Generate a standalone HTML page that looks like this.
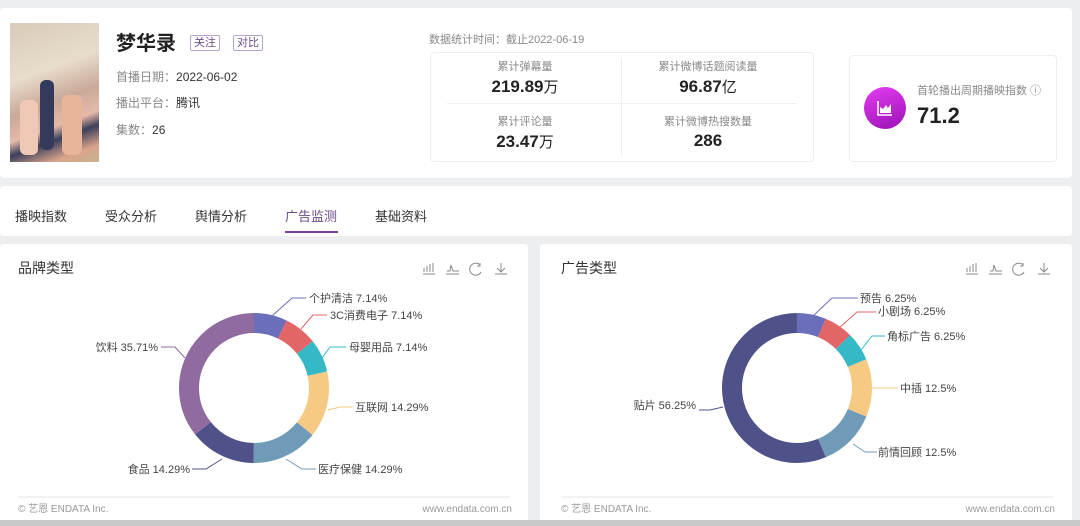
<!DOCTYPE html><html><head><meta charset="utf-8"><style>
*{margin:0;padding:0;box-sizing:border-box}
body{width:1080px;height:526px;background:#eceeef;font-family:"Liberation Sans","Noto Sans CJK SC",sans-serif;position:relative;overflow:hidden;color:#333}
.a{position:absolute;white-space:nowrap}
.card{position:absolute;background:#fff;border-radius:4px}
.g{color:#888}
.tag{position:absolute;border:1px solid #b9a3cc;color:#6b4c8a;font-size:11px;height:16px;line-height:14px;padding:0 3px;border-radius:2px}
.lab{font-size:11px;color:#888;text-align:center;position:absolute}
.val{font-size:17px;font-weight:bold;color:#222;text-align:center;position:absolute}
.val span{font-weight:normal;font-size:15px}
.tab{position:absolute;top:206px;font-size:13px;color:#333}
.ft{font-size:10px;color:#999}
</style></head><body>
<div class="card" style="left:0;top:8px;width:1072px;height:170px"></div>
<div class="a" style="left:10px;top:23px;width:89px;height:139px;background:linear-gradient(160deg,#d8cbb8 0%,#e8dccb 35%,#c9a99a 55%,#e6b9a8 70%,#3b3f5a 78%,#d9a48c 90%,#c7b28f 100%)"></div>
<div class="a" style="left:40px;top:80px;width:14px;height:70px;background:#343a5c;border-radius:6px"></div>
<div class="a" style="left:20px;top:100px;width:18px;height:55px;background:#f0c9b6;border-radius:6px"></div>
<div class="a" style="left:62px;top:95px;width:20px;height:60px;background:#e9b59a;border-radius:6px"></div>
<div class="a" style="left:116px;top:27px;font-size:20px;font-weight:bold;color:#222">梦华录</div>
<div class="tag" style="left:190px;top:35px">关注</div>
<div class="tag" style="left:233px;top:35px">对比</div>
<div class="a" style="left:116px;top:68px;font-size:12px"><span class="g">首播日期：</span>2022-06-02</div>
<div class="a" style="left:116px;top:94px;font-size:12px"><span class="g">播出平台：</span>腾讯</div>
<div class="a" style="left:116px;top:121px;font-size:12px"><span class="g">集数：</span>26</div>
<div class="a g" style="left:429px;top:31px;font-size:11px">数据统计时间：截止2022-06-19</div>
<div class="a" style="left:430px;top:52px;width:384px;height:110px;border:1px solid #eee;border-radius:4px"></div>
<div class="a" style="left:621px;top:58px;width:1px;height:98px;background:#eee"></div>
<div class="a" style="left:447px;top:103px;width:350px;height:1px;background:#eee"></div>
<div class="lab" style="left:430px;width:190px;top:58px">累计弹幕量</div>
<div class="val" style="left:430px;width:190px;top:76px">219.89<span>万</span></div>
<div class="lab" style="left:622px;width:172px;top:58px">累计微博话题阅读量</div>
<div class="val" style="left:622px;width:172px;top:76px">96.87<span>亿</span></div>
<div class="lab" style="left:430px;width:190px;top:113px">累计评论量</div>
<div class="val" style="left:430px;width:190px;top:131px">23.47<span>万</span></div>
<div class="lab" style="left:622px;width:172px;top:113px">累计微博热搜数量</div>
<div class="val" style="left:622px;width:172px;top:131px">286</div>
<div class="a" style="left:849px;top:55px;width:208px;height:107px;border:1px solid #eee;border-radius:4px"></div>
<div class="a" style="left:864px;top:87px;width:42px;height:42px;border-radius:50%;background:linear-gradient(160deg,#e43df0,#9a12b5)"></div>
<svg class="a" style="left:875px;top:98px" width="20" height="20" viewBox="0 0 20 20"><path d="M3 3V17H17" stroke="#fff" stroke-width="1.6" fill="none"/><path d="M5 15V9L8 11L11 7L13 10L16 6V15Z" fill="#fff"/></svg>
<div class="a g" style="left:917px;top:82px;font-size:11px">首轮播出周期播映指数 ⓘ</div>
<div class="a" style="left:917px;top:103px;font-size:22px;font-weight:bold;color:#222">71.2</div>
<div class="card" style="left:0;top:186px;width:1072px;height:50px"></div>
<div class="tab" style="left:15px">播映指数</div>
<div class="tab" style="left:105px">受众分析</div>
<div class="tab" style="left:195px">舆情分析</div>
<div class="tab" style="left:285px;color:#6b4c8a">广告监测</div>
<div class="tab" style="left:375px">基础资料</div>
<div class="a" style="left:285px;top:231px;width:53px;height:2px;background:#7b3f9e"></div>
<div class="card" style="left:0;top:244px;width:528px;height:280px"></div>
<div class="card" style="left:540px;top:244px;width:532px;height:280px"></div>
<div class="a" style="left:18px;top:258px;font-size:14px">品牌类型</div>
<div class="a" style="left:561px;top:258px;font-size:14px">广告类型</div>
<svg class="a" style="left:0;top:244px" width="1080" height="282">
<g fill="none" stroke="#888" stroke-width="1">
<g transform="translate(422,18)"><path d="M1 12H13M2 10V6M5 10V4M8 10V2M11 10V1"/><path d="M24 12H37M25 9L28 9L29 3L31 9L37 9"/><path d="M58 3A6 6 0 1 0 59 10M58 1V4H55"/><path d="M79 1V9M75 6L79 10L83 6M73 12H85"/></g>
<g transform="translate(965,18)"><path d="M1 12H13M2 10V6M5 10V4M8 10V2M11 10V1"/><path d="M24 12H37M25 9L28 9L29 3L31 9L37 9"/><path d="M58 3A6 6 0 1 0 59 10M58 1V4H55"/><path d="M79 1V9M75 6L79 10L83 6M73 12H85"/></g>
</g>
<line x1="18" y1="253" x2="510" y2="253" stroke="#e5e5e5"/>
<line x1="561" y1="253" x2="1053" y2="253" stroke="#e5e5e5"/>
<g fill="none" stroke-width="20" transform="translate(254,144) rotate(-90)">
<circle r="65" stroke="#6b6fbb" stroke-dasharray="29.2 400" stroke-dashoffset="0"/>
<circle r="65" stroke="#e26567" stroke-dasharray="29.2 400" stroke-dashoffset="-29.2"/>
<circle r="65" stroke="#35b9c6" stroke-dasharray="29.2 400" stroke-dashoffset="-58.4"/>
<circle r="65" stroke="#f6c985" stroke-dasharray="58.4 400" stroke-dashoffset="-87.6"/>
<circle r="65" stroke="#6f9bb8" stroke-dasharray="58.4 400" stroke-dashoffset="-146"/>
<circle r="65" stroke="#4e5288" stroke-dasharray="58.4 400" stroke-dashoffset="-204.4"/>
<circle r="65" stroke="#8f6b9f" stroke-dasharray="145.8 400" stroke-dashoffset="-262.8"/>
</g>
<g fill="none" stroke-width="20" transform="translate(797,144) rotate(-90)">
<circle r="65" stroke="#6b6fbb" stroke-dasharray="25.5 400" stroke-dashoffset="0"/>
<circle r="65" stroke="#e26567" stroke-dasharray="25.5 400" stroke-dashoffset="-25.5"/>
<circle r="65" stroke="#35b9c6" stroke-dasharray="25.5 400" stroke-dashoffset="-51"/>
<circle r="65" stroke="#f6c985" stroke-dasharray="51 400" stroke-dashoffset="-76.5"/>
<circle r="65" stroke="#6f9bb8" stroke-dasharray="51 400" stroke-dashoffset="-127.5"/>
<circle r="65" stroke="#4e5288" stroke-dasharray="229.7 400" stroke-dashoffset="-178.5"/>
</g>
<g fill="none" stroke-width="1">
<path d="M272 72L292 54H306" stroke="#6b6fbb"/>
<path d="M301 85L313 71H327" stroke="#e26567"/>
<path d="M322 114L330 103H346" stroke="#35b9c6"/>
<path d="M328 166L340 163H353" stroke="#f6c985"/>
<path d="M286 215L302 225H316" stroke="#6f9bb8"/>
<path d="M222 215L206 225H192" stroke="#4e5288"/>
<path d="M185 114L175 103H161" stroke="#8f6b9f"/>
<path d="M813 72L832 54H858" stroke="#6b6fbb"/>
<path d="M839 84L857 68H876" stroke="#e26567"/>
<path d="M861 106L872 92H885" stroke="#35b9c6"/>
<path d="M872 144H898" stroke="#f6c985"/>
<path d="M853 200L865 208H877" stroke="#6f9bb8"/>
<path d="M723 163L710 166H699" stroke="#4e5288"/>
</g>
<g font-size="11" fill="#444" font-family="Liberation Sans,Noto Sans CJK SC,sans-serif">
<text x="309" y="58">个护清洁 7.14%</text>
<text x="330" y="75">3C消费电子 7.14%</text>
<text x="349" y="107">母婴用品 7.14%</text>
<text x="355" y="167">互联网 14.29%</text>
<text x="318" y="229">医疗保健 14.29%</text>
<text x="190" y="229" text-anchor="end">食品 14.29%</text>
<text x="158" y="107" text-anchor="end">饮料 35.71%</text>
<text x="860" y="58">预告 6.25%</text>
<text x="878" y="71">小剧场 6.25%</text>
<text x="887" y="96">角标广告 6.25%</text>
<text x="900" y="148">中插 12.5%</text>
<text x="878" y="212">前情回顾 12.5%</text>
<text x="696" y="165" text-anchor="end">贴片 56.25%</text>
</g>
<g font-size="10" fill="#999" font-family="Liberation Sans,Noto Sans CJK SC,sans-serif">
<text x="18" y="268">© 艺恩 ENDATA Inc.</text>
<text x="512" y="268" text-anchor="end">www.endata.com.cn</text>
<text x="561" y="268">© 艺恩 ENDATA Inc.</text>
<text x="1055" y="268" text-anchor="end">www.endata.com.cn</text>
</g>
</svg>
<div class="a" style="left:0;top:520px;width:1080px;height:6px;background:#c8c8c8"></div>
</body></html>
